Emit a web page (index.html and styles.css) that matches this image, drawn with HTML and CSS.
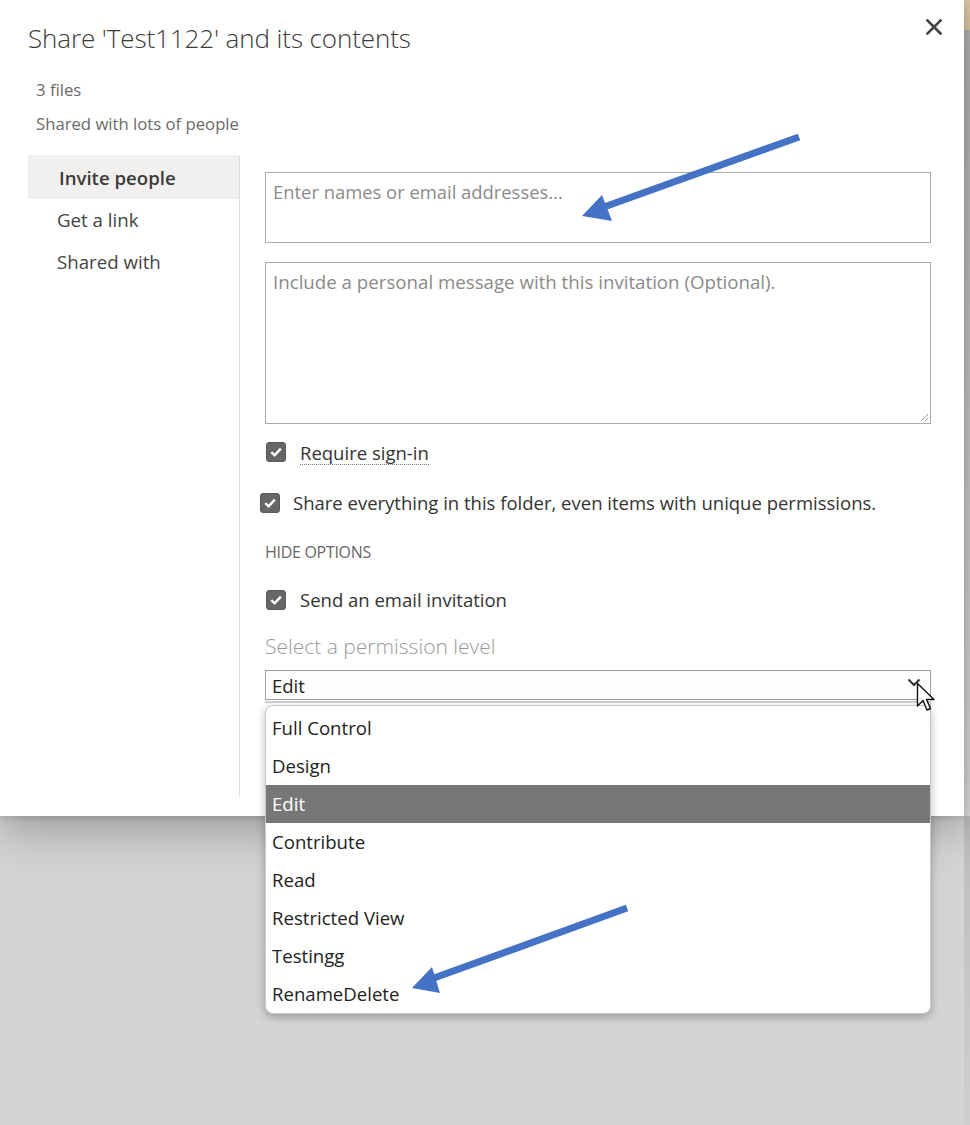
FILE: index.html
```html
<!DOCTYPE html>
<html lang="en">
<head>
<meta charset="utf-8">
<title>Share</title>
<link rel="stylesheet" href="styles.css">
</head>
<body>
<div class="screen">
  <div class="dialog">
    <header class="head">
      <h1 class="title">Share 'Test1122' and its contents</h1>
      <span class="close" aria-label="Close">
        <svg width="18" height="18" viewBox="0 0 18 18"><path d="M2.5 2.5 L15.5 15.5 M15.5 2.5 L2.5 15.5" stroke="#444" stroke-width="2.6" stroke-linecap="square"/></svg>
      </span>
    </header>
    <div class="meta">
      <div>3 files</div>
      <div>Shared with lots of people</div>
    </div>
    <div class="body">
      <nav class="nav">
        <div class="nav-item active">Invite people</div>
        <div class="nav-item">Get a link</div>
        <div class="nav-item">Shared with</div>
      </nav>
      <div class="content">
        <div class="field names"><span class="ph">Enter names or email addresses...</span></div>
        <div class="field message">
          <span class="ph msg">Include a personal message with this invitation (Optional).</span>
          <svg class="grip" width="10" height="10" viewBox="0 0 10 10"><path d="M9 2 L2 9 M9 6 L6 9" stroke="#999" stroke-width="1"/></svg>
        </div>
        <div class="check row-req">
          <span class="box"><svg width="14" height="14" viewBox="0 0 14 14"><path d="M2.3 7.2 L5.6 10.4 L11.8 3.6" fill="none" stroke="#fff" stroke-width="2.4"/></svg></span>
          <span class="lbl dotted">Require sign-in</span>
        </div>
        <div class="check row-share">
          <span class="box"><svg width="14" height="14" viewBox="0 0 14 14"><path d="M2.3 7.2 L5.6 10.4 L11.8 3.6" fill="none" stroke="#fff" stroke-width="2.4"/></svg></span>
          <span class="lbl">Share everything in this folder, even items with unique permissions.</span>
        </div>
        <div class="hide-opts">HIDE OPTIONS</div>
        <div class="check row-email">
          <span class="box"><svg width="14" height="14" viewBox="0 0 14 14"><path d="M2.3 7.2 L5.6 10.4 L11.8 3.6" fill="none" stroke="#fff" stroke-width="2.4"/></svg></span>
          <span class="lbl">Send an email invitation</span>
        </div>
        <div class="perm-label">Select a permission level</div>
        <div class="select-wrap">
          <div class="select">
            <span>Edit</span>
            <svg class="chev" width="14" height="9" viewBox="0 0 14 9"><path d="M1.5 1.5 L7 7 L12.5 1.5" fill="none" stroke="#333" stroke-width="2"/></svg>
          </div>
          <div class="under"></div>
          <ul class="dropdown">
            <li>Full Control</li>
            <li>Design</li>
            <li class="sel">Edit</li>
            <li>Contribute</li>
            <li>Read</li>
            <li>Restricted View</li>
            <li>Testingg</li>
            <li>RenameDelete</li>
          </ul>
          <svg class="cursor" width="22" height="32" viewBox="0 0 22 32"><path d="M1.5 1.5 L1.5 24 L7 18.5 L11 28 L14.5 26.5 L10.5 17.5 L18 17.5 Z" fill="#fff" stroke="#111" stroke-width="1.4" stroke-linejoin="round"/></svg>
        </div>
      </div>
    </div>
  </div>
  <div class="edge"></div>
</div>
<svg class="annot" width="970" height="1125" viewBox="0 0 970 1125">
  <line x1="799" y1="137" x2="604" y2="207" stroke="#4472c4" stroke-width="7"/>
  <polygon points="582,216 602,195 612,221" fill="#4472c4"/>
  <line x1="627" y1="908" x2="434" y2="978" stroke="#4472c4" stroke-width="7"/>
  <polygon points="412,988 432,967 440,993" fill="#4472c4"/>
</svg>
</body>
</html>
```
FILE: styles.css
```css
* { box-sizing: border-box; }
html, body { margin: 0; padding: 0; }
body {
  width: 970px;
  height: 1125px;
  overflow: hidden;
  position: relative;
  background: #d4d4d2;
  font-family: "Open Sans", "Noto Sans", "DejaVu Sans", sans-serif;
  color: #333;
}
.screen {
  display: flex;
  align-items: flex-start;
  width: 970px;
  height: 1125px;
}
.dialog {
  position: relative;
  z-index: 1;
  width: 964px;
  height: 816px;
  background: #fff;
  box-shadow: 0 12px 45px rgba(0, 0, 0, 0.3), 0 2px 6px rgba(0, 0, 0, 0.12);
  display: flex;
  flex-direction: column;
}
.edge {
  width: 6px;
  height: 1125px;
  background: linear-gradient(#d8c7a2 0 30px, #b4b4b4 30px, #dedede 816px, #bdbdbb 816px, #cfcfcd 1125px);
}
.head {
  display: flex;
  justify-content: space-between;
  align-items: flex-start;
  height: 73px;
  padding: 21px 21px 0 28px;
}
.title {
  margin: 0;
  font-size: 26px;
  font-weight: 300;
  line-height: 34px;
  color: #3a3a3a;
  letter-spacing: -0.1px;
}
.close {
  display: block;
  width: 18px;
  height: 18px;
  margin-top: -3px;
}
.close svg { display: block; }
.meta {
  padding-left: 36px;
  font-size: 16.7px;
  line-height: 34px;
  color: #6a6a6a;
  margin-bottom: 14px;
}
.body {
  display: flex;
  flex: 1;
}
.nav {
  width: 212px;
  height: 642px;
  margin-left: 28px;
  border-right: 1px solid #dcdcdc;
}
.nav-item {
  height: 42px;
  line-height: 42px;
  padding-left: 29px;
  font-size: 18.7px;
  color: #444;
}
.nav-item.active {
  height: 44px;
  line-height: 46px;
  padding-left: 31px;
  background: #f1f0ef;
  font-weight: 600;
  font-size: 18.6px;
  color: #3a3a3a;
}
.content {
  padding: 17px 0 0 25px;
  width: 691px;
}
.field {
  position: relative;
  width: 666px;
  border: 1px solid #ababab;
  padding: 6px 7px;
  font-size: 18.4px;
  line-height: 26px;
}
.field .ph { color: #8a8a8a; }
.field .msg { font-size: 18.7px; }
.names { height: 71px; }
.message { height: 162px; margin-top: 19px; }
.grip {
  position: absolute;
  right: 1px;
  bottom: 1px;
}
.check {
  display: flex;
  align-items: center;
  gap: 14px;
  height: 20px;
  font-size: 18.5px;
  color: #333;
}
.box {
  width: 20px;
  height: 20px;
  border-radius: 3px;
  background: #666;
  border: 1px solid #5a5a5a;
  display: flex;
  align-items: center;
  justify-content: center;
  flex: none;
}
.box svg { display: block; }
.row-req { margin-top: 18px; margin-left: 1px; }
.row-share { margin-top: 31px; margin-left: -5px; gap: 13px; }
.row-email { margin-top: 28px; margin-left: 1px; }
.lbl { line-height: 20px; }
.dotted {
  border-bottom: 1px dotted #777;
  line-height: 22px;
  margin-top: 2px;
}
.hide-opts {
  margin-top: 29px;
  font-size: 16px;
  line-height: 20px;
  color: #666;
  letter-spacing: -0.3px;
}
.perm-label {
  margin-top: 23px;
  font-size: 21px;
  font-weight: 300;
  line-height: 26px;
  color: #999;
}
.select-wrap {
  position: relative;
  width: 666px;
  margin-top: 11px;
}
.select {
  height: 30px;
  border: 1px solid #9aa0a4;
  display: flex;
  align-items: center;
  justify-content: space-between;
  padding: 0 9px 0 6px;
  font-size: 18.5px;
  color: #222;
  background: #fdfdfc;
}
.chev { display: block; margin-top: -6px; }
.under {
  height: 80px;
  margin-top: 1px;
  border-top: 2px solid #d2d2d2;
  border-right: 1px solid #b8b8b8;
}
.dropdown {
  position: absolute;
  left: 0;
  top: 35px;
  width: 666px;
  margin: 0;
  padding: 3px 0 0 0;
  list-style: none;
  background: #fff;
  border: 1px solid #c9c9c9;
  border-radius: 8px;
  overflow: hidden;
  box-shadow: 0 3px 10px rgba(0, 0, 0, 0.28);
  z-index: 3;
}
.dropdown li {
  height: 38px;
  line-height: 38px;
  padding-left: 6px;
  font-size: 18.6px;
  color: #222;
}
.dropdown li.sel {
  background: #777;
  color: #fff;
}
.cursor {
  position: absolute;
  right: -7px;
  top: 12px;
  z-index: 4;
}
.annot {
  position: absolute;
  left: 0;
  top: 0;
  z-index: 10;
  pointer-events: none;
}
```
